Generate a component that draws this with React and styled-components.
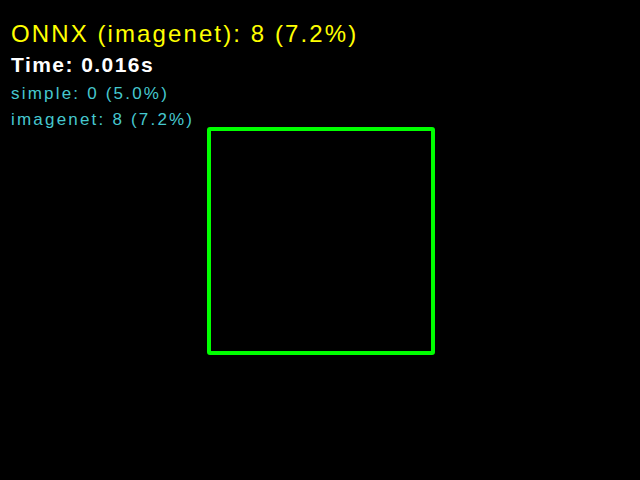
import React from "react";
import styled, { createGlobalStyle } from "styled-components";

const GlobalStyle = createGlobalStyle`
  html, body {
    margin: 0;
    padding: 0;
    background: #000;
  }
`;

const Canvas = styled.div`
  position: relative;
  width: 640px;
  height: 480px;
  background: #000;
  overflow: hidden;
  font-family: "Liberation Sans", Arial, sans-serif;
`;

const Overlay = styled.div`
  display: flex;
  flex-direction: column;
  padding: 18px 0 0 11px;
`;

const Line = styled.div`
  height: ${(p) => p.$h}px;
  line-height: ${(p) => p.$h}px;
  font-size: ${(p) => p.$size}px;
  font-weight: ${(p) => (p.$bold ? 700 : 400)};
  letter-spacing: ${(p) => p.$spacing}px;
  color: ${(p) => p.$color};
  white-space: nowrap;
`;

const DetectionBox = styled.div`
  position: absolute;
  left: 207px;
  top: 127px;
  width: 228px;
  height: 228px;
  box-sizing: border-box;
  border: 4px solid #00ff00;
  border-radius: 3px;
`;

const App = () => {
  return (
    <>
      <GlobalStyle />
      <Canvas>
        <Overlay>
          <Line $h={31} $size={24} $spacing={2.1} $color="#ffff00">
            ONNX (imagenet): 8 (7.2%)
          </Line>
          <Line $h={31} $size={21} $spacing={1.45} $color="#ffffff" $bold>
            Time: 0.016s
          </Line>
          <Line $h={28} $size={17} $spacing={2.2} $color="#46c8cf">
            simple: 0 (5.0%)
          </Line>
          <Line $h={24} $size={17} $spacing={2.2} $color="#46c8cf">
            imagenet: 8 (7.2%)
          </Line>
        </Overlay>
        <DetectionBox />
      </Canvas>
    </>
  );
};

export default App;
